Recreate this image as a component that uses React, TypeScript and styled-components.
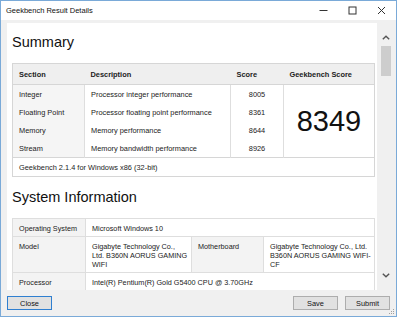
import styled, { createGlobalStyle } from "styled-components";

const GlobalStyle = createGlobalStyle`
  html, body {
    margin: 0;
    padding: 0;
    background: #ffffff;
  }
  body {
    font-family: "Liberation Sans", Arial, sans-serif;
    color: #000;
  }
`;

const scores = [
  { section: "Integer", description: "Processor integer performance", score: 8005 },
  { section: "Floating Point", description: "Processor floating point performance", score: 8361 },
  { section: "Memory", description: "Memory performance", score: 8644 },
  { section: "Stream", description: "Memory bandwidth performance", score: 8926 },
];

const App = () => {
  return (
    <>
      <GlobalStyle />
      <Window>
        <TitleBar>
          <span>Geekbench Result Details</span>
          <Controls>
            <ControlButton>
              <svg width="9" height="9" viewBox="0 0 9 9">
                <line x1="0.5" y1="4.5" x2="8.5" y2="4.5" stroke="#333" strokeWidth="1" />
              </svg>
            </ControlButton>
            <ControlButton>
              <svg width="9" height="9" viewBox="0 0 9 9">
                <rect x="1" y="1" width="7" height="7" fill="none" stroke="#333" strokeWidth="1" />
              </svg>
            </ControlButton>
            <ControlButton>
              <svg width="9" height="9" viewBox="0 0 9 9">
                <path d="M1 1 L8 8 M8 1 L1 8" stroke="#333" strokeWidth="1" />
              </svg>
            </ControlButton>
          </Controls>
        </TitleBar>

        <Main>
          <Panel>
            <Heading>Summary</Heading>
            <ScoreTable>
              <colgroup>
                <col style={{ width: 72 }} />
                <col style={{ width: 146 }} />
                <col style={{ width: 53 }} />
                <col style={{ width: 91 }} />
              </colgroup>
              <thead>
                <tr>
                  <HeadCell>Section</HeadCell>
                  <HeadCell>Description</HeadCell>
                  <HeadCell>Score</HeadCell>
                  <HeadCell>Geekbench Score</HeadCell>
                </tr>
              </thead>
              <tbody>
                {scores.map((row, i) => (
                  <tr key={row.section}>
                    <Cell $label>{row.section}</Cell>
                    <Cell>{row.description}</Cell>
                    <Cell $center>{row.score}</Cell>
                    {i === 0 ? <BigScore rowSpan={4}>8349</BigScore> : null}
                  </tr>
                ))}
                <tr>
                  <FootCell colSpan={4}>Geekbench 2.1.4 for Windows x86 (32-bit)</FootCell>
                </tr>
              </tbody>
            </ScoreTable>

            <Heading>System Information</Heading>
            <InfoTable>
              <colgroup>
                <col style={{ width: 73 }} />
                <col style={{ width: 106 }} />
                <col style={{ width: 72 }} />
                <col style={{ width: 111 }} />
              </colgroup>
              <tbody>
                <tr>
                  <InfoLabel>Operating System</InfoLabel>
                  <InfoValue colSpan={3}>Microsoft Windows 10</InfoValue>
                </tr>
                <tr>
                  <InfoLabel>Model</InfoLabel>
                  <InfoValue $padRight={3}>Gigabyte Technology Co., Ltd. B360N AORUS GAMING WIFI</InfoValue>
                  <InfoLabel>Motherboard</InfoLabel>
                  <InfoValue $padRight={0}>Gigabyte Technology Co., Ltd. B360N AORUS GAMING WIFI-CF</InfoValue>
                </tr>
                <tr>
                  <InfoLabel>Processor</InfoLabel>
                  <InfoValue colSpan={3}>Intel(R) Pentium(R) Gold G5400 CPU @ 3.70GHz</InfoValue>
                </tr>
              </tbody>
            </InfoTable>
          </Panel>

          <Scrollbar>
            <ArrowButton $top>
              <svg width="8" height="5" viewBox="0 0 8 5">
                <path d="M0.8 4.2 L4 1.2 L7.2 4.2" fill="none" stroke="#555" strokeWidth="1.4" />
              </svg>
            </ArrowButton>
            <Thumb />
            <Track />
            <ArrowButton>
              <svg width="8" height="5" viewBox="0 0 8 5">
                <path d="M0.8 0.8 L4 3.8 L7.2 0.8" fill="none" stroke="#555" strokeWidth="1.4" />
              </svg>
            </ArrowButton>
          </Scrollbar>
        </Main>

        <ButtonBar>
          <Button $primary>Close</Button>
          <ButtonGroup>
            <Button>Save</Button>
            <Button>Submit</Button>
          </ButtonGroup>
          <SizeGrip width="6" height="6" viewBox="0 0 6 6">
            <rect x="4" y="0" width="1" height="1" fill="#a0a0a0" />
            <rect x="2" y="2" width="1" height="1" fill="#a0a0a0" />
            <rect x="4" y="2" width="1" height="1" fill="#a0a0a0" />
            <rect x="0" y="4" width="1" height="1" fill="#a0a0a0" />
            <rect x="2" y="4" width="1" height="1" fill="#a0a0a0" />
            <rect x="4" y="4" width="1" height="1" fill="#a0a0a0" />
          </SizeGrip>
        </ButtonBar>
      </Window>
    </>
  );
};

export default App;

const Window = styled.div`
  width: 397px;
  height: 317px;
  box-sizing: border-box;
  border: 1px solid #7aaad8;
  background-color: #f0f0f0;
  display: flex;
  flex-direction: column;
  overflow: hidden;
`;

const TitleBar = styled.div`
  height: 19px;
  flex-shrink: 0;
  background-color: #ffffff;
  display: flex;
  align-items: center;
  padding-left: 5px;
  font-size: 7.5px;
  color: #111;
`;

const Controls = styled.div`
  margin-left: auto;
  display: flex;
`;

const ControlButton = styled.div`
  width: 29px;
  height: 19px;
  display: flex;
  align-items: center;
  justify-content: center;
`;

const Main = styled.div`
  flex: 1;
  min-height: 0;
  display: flex;
  gap: 2px;
  padding: 3px 3px 0 6px;
`;

const Panel = styled.div`
  flex: 1;
  background-color: #ffffff;
  overflow: hidden;
  padding: 11px 3px 0 5px;
`;

const Heading = styled.div`
  font-size: 14.5px;
  line-height: 17px;
  color: #111;
  margin-bottom: 12px;
`;

const ScoreTable = styled.table`
  width: 362px;
  table-layout: fixed;
  border-collapse: collapse;
  border: 1px solid #d6d6d6;
  font-size: 7.4px;
  margin-bottom: 12px;
`;

const HeadCell = styled.th`
  height: 20px;
  padding: 0 6px;
  background-color: #efefef;
  border-bottom: 1px solid #d6d6d6;
  text-align: left;
  font-weight: bold;
  color: #222;
  white-space: nowrap;
`;

const Cell = styled.td<{ $label?: boolean; $center?: boolean }>`
  height: 18px;
  padding: 0 6px;
  background-color: ${(p) => (p.$label ? "#f5f5f5" : "#ffffff")};
  border-right: 1px solid #dedede;
  text-align: ${(p) => (p.$center ? "center" : "left")};
  color: #222;
  white-space: nowrap;
`;

const BigScore = styled.td`
  font-size: 29px;
  text-align: center;
  vertical-align: middle;
  color: #111;
`;

const FootCell = styled.td`
  height: 18px;
  padding: 0 6px;
  border-top: 1px solid #d6d6d6;
  color: #222;
`;

const InfoTable = styled.table`
  width: 362px;
  table-layout: fixed;
  border-collapse: collapse;
  border: 1px solid #d6d6d6;
  font-size: 7.25px;
  line-height: 9px;
`;

const InfoLabel = styled.td`
  padding: 5px 1px 3px 6px;
  vertical-align: top;
  background-color: #f3f3f3;
  border: 1px solid #dedede;
  color: #222;
  white-space: nowrap;
`;

const InfoValue = styled.td<{ $padRight?: number }>`
  padding: 5px ${(p) => p.$padRight ?? 1}px 3px 6px;
  vertical-align: top;
  background-color: #ffffff;
  border: 1px solid #dedede;
  color: #222;
`;

const Scrollbar = styled.div`
  width: 14px;
  display: flex;
  flex-direction: column;
  align-items: center;
`;

const ArrowButton = styled.div<{ $top?: boolean }>`
  width: 14px;
  height: 17px;
  flex-shrink: 0;
  display: flex;
  align-items: center;
  justify-content: center;
  margin-top: ${(p) => (p.$top ? "6px" : "0")};
  margin-bottom: ${(p) => (p.$top ? "0" : "6px")};
`;

const Thumb = styled.div`
  width: 10px;
  height: 30px;
  flex-shrink: 0;
  background-color: #cdcdcd;
`;

const Track = styled.div`
  flex: 1;
`;

const ButtonBar = styled.div`
  height: 26px;
  flex-shrink: 0;
  display: flex;
  align-items: center;
  justify-content: space-between;
  padding: 0 6px;
  position: relative;
`;

const ButtonGroup = styled.div`
  display: flex;
  gap: 7px;
`;

const Button = styled.button<{ $primary?: boolean }>`
  box-sizing: border-box;
  width: 45px;
  height: 14px;
  padding: 0;
  display: inline-flex;
  align-items: center;
  justify-content: center;
  font-family: "Liberation Sans", Arial, sans-serif;
  font-size: 7.4px;
  line-height: 9px;
  color: #111;
  background-color: #e1e1e1;
  border: 1px solid ${(p) => (p.$primary ? "#2f7fd0" : "#adadad")};
`;

const SizeGrip = styled.svg`
  position: absolute;
  right: 1px;
  bottom: 1px;
`;
